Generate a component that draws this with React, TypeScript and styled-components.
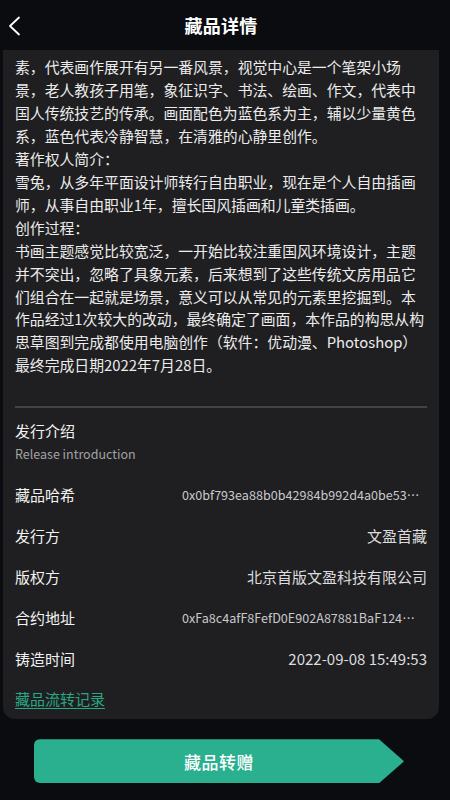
import React from 'react';
import styled, { createGlobalStyle } from 'styled-components';

const GlobalStyle = createGlobalStyle`
  body {
    margin: 0;
    background: #0b0c0f;
    font-family: "Noto Sans CJK SC", "Noto Sans", sans-serif;
    color: #ececec;
  }
`;

const Page = styled.div`
  width: 450px;
  height: 800px;
  overflow: hidden;
  background: #0b0c0f;
`;

const Header = styled.header`
  position: relative;
  height: 50px;
  display: flex;
  align-items: center;
  justify-content: center;
`;

const BackButton = styled.button`
  position: absolute;
  left: 4px;
  top: 14px;
  width: 20px;
  height: 24px;
  padding: 0;
  border: none;
  background: transparent;
  display: flex;
  align-items: center;
  justify-content: center;
`;

const Title = styled.h1`
  margin: 0;
  font-size: 18px;
  font-weight: 700;
  color: #ffffff;
  letter-spacing: 0.3px;
  transform: translateX(-4px);
`;

const Card = styled.section`
  margin-left: 3px;
  width: 436px;
  box-sizing: border-box;
  background: #1f1f21;
  border-radius: 0 0 12px 12px;
  padding: 6px 12px 9px;
`;

const Paragraph = styled.p`
  margin: 0;
  font-size: 14.85px;
  line-height: 22.95px;
  color: #ececec;
`;

const Divider = styled.hr`
  margin: 29px 0 11px;
  border: none;
  height: 2px;
  background: #434345;
`;

const SectionTitle = styled.div`
  font-size: 15px;
  line-height: 23px;
  color: #f2f2f2;
`;

const SectionSub = styled.div`
  margin-top: 2px;
  font-size: 12.5px;
  line-height: 20px;
  color: #a2a2a4;
`;

const InfoList = styled.div`
  margin-top: 10px;
  display: flex;
  flex-direction: column;
`;

const Row = styled.div`
  height: 41px;
  display: flex;
  align-items: center;
  justify-content: space-between;
`;

const Label = styled.span`
  font-size: 15px;
  color: #f2f2f2;
  flex-shrink: 0;
`;

const Value = styled.span<{ $mono?: boolean }>`
  font-size: ${(p) => (p.$mono ? '12.6px' : '15px')};
  color: ${(p) => (p.$mono ? '#c9c9cb' : '#dcdcde')};
  max-width: ${(p) => (p.$mono ? '240px' : '300px')};
  margin-right: ${(p) => (p.$mono ? '5px' : '0')};
  white-space: nowrap;
  overflow: hidden;
  text-overflow: ellipsis;
`;

const HistoryLink = styled.a`
  display: inline-block;
  margin-top: 8px;
  font-size: 15px;
  line-height: 23px;
  color: #2aa784;
  text-decoration: underline;
  text-underline-offset: 3px;
`;

const Footer = styled.div`
  padding: 20px 0 0 34px;
`;

const TransferButton = styled.button`
  width: 370px;
  height: 44px;
  border: none;
  border-radius: 6px 0 0 6px;
  background: #2bb08f;
  color: #ffffff;
  font-family: "Noto Sans CJK SC", "Noto Sans", sans-serif;
  font-size: 17px;
  font-weight: 500;
  letter-spacing: 0.5px;
  clip-path: polygon(0 0, calc(100% - 25px) 0, 100% 50%, calc(100% - 25px) 100%, 0 100%);
`;

const info = [
  { label: '藏品哈希', value: '0x0bf793ea88b0b42984b992d4a0be53e1c7f0a9d2', mono: true },
  { label: '发行方', value: '文盈首藏' },
  { label: '版权方', value: '北京首版文盈科技有限公司' },
  { label: '合约地址', value: '0xFa8c4afF8FefD0E902A87881BaF124C3e9d5a07b', mono: true },
  { label: '铸造时间', value: '2022-09-08 15:49:53' },
];

const App: React.FC = () => {
  return (
    <Page>
      <GlobalStyle />
      <Header>
        <BackButton aria-label="返回">
          <svg width="14" height="20" viewBox="0 0 14 20">
            <path d="M12 1.5 L3 10 L12 18.5" fill="none" stroke="#ffffff" strokeWidth="1.8" strokeLinecap="round" strokeLinejoin="round" />
          </svg>
        </BackButton>
        <Title>藏品详情</Title>
      </Header>

      <Card>
        <Paragraph>
          素，代表画作展开有另一番风景，视觉中心是一个笔架小场景，老人教孩子用笔，象征识字、书法、绘画、作文，代表中国人传统技艺的传承。画面配色为蓝色系为主，辅以少量黄色系，蓝色代表冷静智慧，在清雅的心静里创作。
        </Paragraph>
        <Paragraph>著作权人简介：</Paragraph>
        <Paragraph>雪兔，从多年平面设计师转行自由职业，现在是个人自由插画师，从事自由职业1年，擅长国风插画和儿童类插画。</Paragraph>
        <Paragraph>创作过程：</Paragraph>
        <Paragraph>
          书画主题感觉比较宽泛，一开始比较注重国风环境设计，主题并不突出，忽略了具象元素，后来想到了这些传统文房用品它们组合在一起就是场景，意义可以从常见的元素里挖掘到。本作品经过1次较大的改动，最终确定了画面，本作品的构思从构思草图到完成都使用电脑创作（软件：优动漫、Photoshop）最终完成日期2022年7月28日。
        </Paragraph>

        <Divider />

        <SectionTitle>发行介绍</SectionTitle>
        <SectionSub>Release introduction</SectionSub>

        <InfoList>
          {info.map((item) => (
            <Row key={item.label}>
              <Label>{item.label}</Label>
              <Value $mono={item.mono}>{item.value}</Value>
            </Row>
          ))}
        </InfoList>

        <HistoryLink href="#">藏品流转记录</HistoryLink>
      </Card>

      <Footer>
        <TransferButton>藏品转赠</TransferButton>
      </Footer>
    </Page>
  );
};

export default App;
